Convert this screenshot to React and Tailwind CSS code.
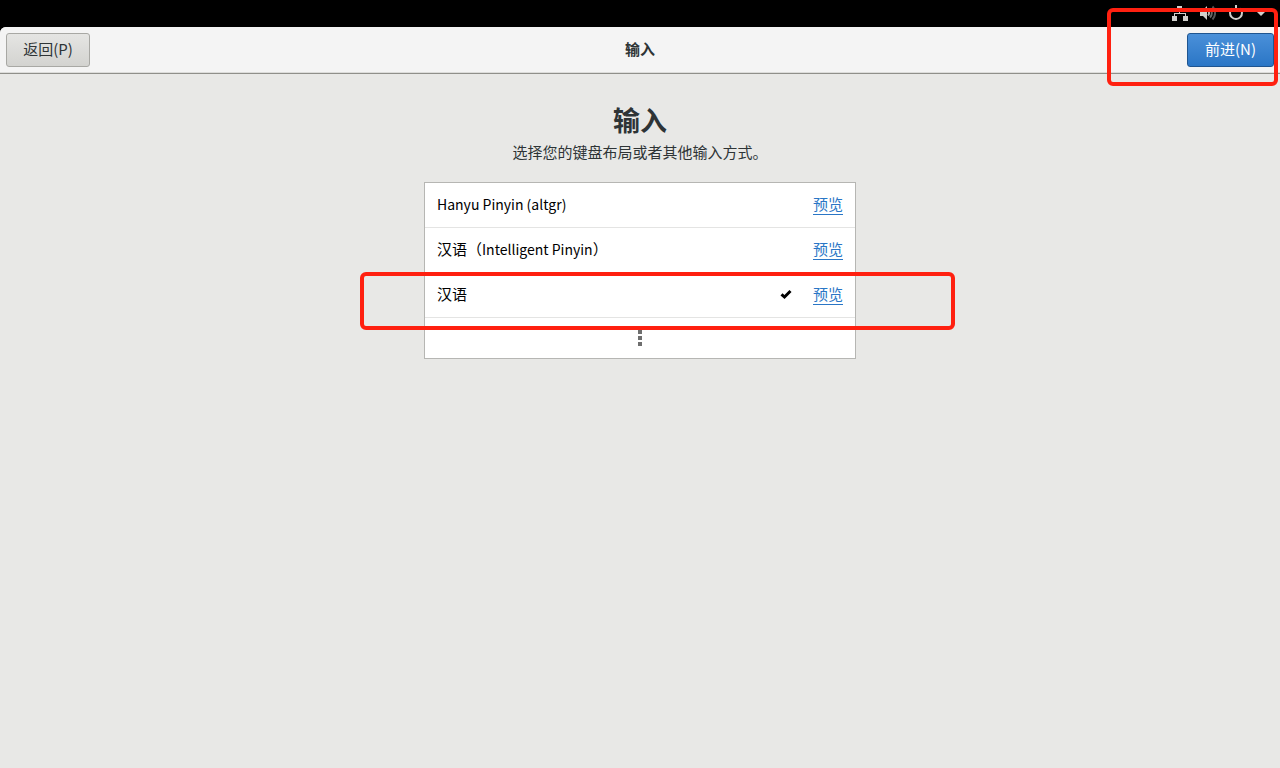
import { useState } from 'react'

const layouts = [
  { id: 'pinyin-altgr', name: <span className="text-sm">Hanyu Pinyin (altgr)</span> },
  { id: 'libpinyin', name: <span>汉语（<span className="text-sm">Intelligent Pinyin</span>）</span> },
  { id: 'cn', name: '汉语', marked: true },
]

function NetworkIcon() {
  return (
    <svg className="w-4 h-4" viewBox="0 0 16 16" fill="#d0d0cc" aria-hidden="true">
      <path d="M5 1h5v5H8v2h6v3h2v5h-5v-5h2V9H3v2h2v5H0v-5h2V8h5V6H5z" />
    </svg>
  )
}

function VolumeIcon() {
  return (
    <svg className="w-4 h-4" viewBox="0 0 16 16" fill="none" aria-hidden="true">
      <path d="M0 5h3l4-4v14l-4-4H0z" fill="#d0d0cc" />
      <path d="M8 5.500a3.500 3.500 0 0 1 0 5" stroke="#b0b0ac" strokeWidth="2" />
      <path d="M10 3.500a6.500 6.500 0 0 1 0 9" stroke="#6a6a68" strokeWidth="2" />
      <path d="M12.500 1.500a9.500 9.500 0 0 1 0 13" stroke="#555" strokeWidth="2" />
    </svg>
  )
}

function PowerIcon() {
  return (
    <svg className="w-4 h-4" viewBox="0 0 16 16" fill="none" stroke="#d0d0cc" strokeWidth="2" aria-hidden="true">
      <path d="M4 3.500a6 6 0 1 0 8 0" />
      <path d="M8 0v7" />
    </svg>
  )
}

function CheckIcon() {
  return (
    <svg className="w-3 h-3" viewBox="0 0 12 12" aria-hidden="true">
      <path d="M1.500 6.300 4.500 9 10.500 3" fill="none" stroke="#000" strokeWidth="3" />
    </svg>
  )
}

// Hand-drawn style red frame around the thing to click
function Marker({ className }) {
  return <div className={`absolute pointer-events-none rounded-md border-4 border-[#ff2010] ${className}`}></div>
}

export default function App() {
  const [selected, setSelected] = useState('cn')

  return (
    <div className="relative min-h-screen bg-black text-[#2e3436] text-[15px] leading-5 font-['Noto_Sans_CJK_SC',sans-serif]">
      {/* Top bar */}
      <div className="h-[27px] flex justify-end items-center gap-3 pr-[14px] pb-[2px]">
        <NetworkIcon />
        <VolumeIcon />
        <PowerIcon />
        <svg className="w-[10px] h-2" viewBox="0 0 10 8" fill="#d0d0cc" aria-hidden="true">
          <path d="M0 2h10L5 7z" />
        </svg>
      </div>

      <div className="min-h-[calc(100vh-27px)] rounded-tl-md bg-[#e8e8e6]">
        {/* Header bar */}
        <header className="h-[47px] grid grid-cols-3 items-center px-[6px] rounded-tl-md bg-[#f4f4f4] border-b border-[#8f8f8a] shadow-[inset_0_-1px_0_#dcdcda]">
          <button className="justify-self-start h-[34px] w-[84px] pb-[2px] rounded-[3px] border border-[#a8a8a4] bg-linear-to-b from-[#e5e5e3] to-[#d3d3d0]">
            返回(P)
          </button>
          <h2 className="pb-[2px] text-center font-bold">输入</h2>
          <button className="justify-self-end h-[34px] w-[87px] pb-[2px] rounded-[3px] border border-[#1f5590] bg-linear-to-b from-[#4a90d9] to-[#2a76c6] text-white">
            前进(N)
          </button>
        </header>

        <main className="flex flex-col items-center pt-7">
          <h1 className="text-[27px] leading-9 font-bold">输入</h1>
          <p className="mt-1 mb-5">选择您的键盘布局或者其他输入方式。</p>

          <div className="w-[432px] max-w-full bg-white border border-[#b6b6b3] text-black">
            {layouts.map((layout) => (
              <div key={layout.id} className="relative h-[45px] flex items-center px-3 pb-[2px] border-b border-[#e4e4e3]">
                <label className="flex-1 flex items-center justify-between">
                  <input
                    type="radio"
                    name="layout"
                    className="sr-only"
                    checked={selected === layout.id}
                    onChange={() => setSelected(layout.id)}
                  />
                  {layout.name}
                  {selected === layout.id && <CheckIcon />}
                </label>
                <a href="#preview" className="ml-[21px] border-b border-[#2a76c6] text-[#2a76c6]">预览</a>
                {layout.marked && <Marker className="-left-[65px] -right-[100px] -top-[1px] h-[58px]" />}
              </div>
            ))}
            <button className="w-full h-10 flex flex-col items-center justify-center gap-[2px]" aria-label="更多">
              <span className="w-1 h-1 bg-[#6e6e6e]"></span>
              <span className="w-1 h-1 bg-[#6e6e6e]"></span>
              <span className="w-1 h-1 bg-[#6e6e6e]"></span>
            </button>
          </div>
        </main>
      </div>

      <Marker className="right-[2px] top-2 w-[171px] h-[78px]" />
    </div>
  )
}
